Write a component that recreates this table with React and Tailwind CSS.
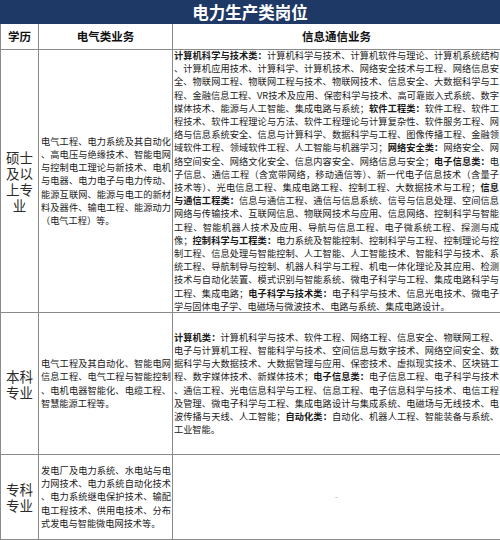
const B = ({ children }) => <b className="font-bold">{children}</b>;

// each line is rendered on its own, stretched to the cell width like the justified source
function Lines({ lines }) {
  return (
    <div className="w-full">
      {lines.map((ln, i) => (
        <div
          key={i}
          className={
            i === lines.length - 1
              ? "text-left"
              : "text-justify [text-align-last:justify]"
          }
        >
          {ln}
        </div>
      ))}
    </div>
  );
}

const masterElec = [
  "电气工程、电力系统及其自动化",
  "、高电压与绝缘技术、智能电网",
  "与控制电工理论与新技术、电机",
  "与电器、电力电子与电力传动、",
  "能源互联网、能源与电工的新材",
  "料及器件、输电工程、能源动力",
  "（电气工程）等。",
];

const masterInfo = [
  <><B>计算机科学与技术类：</B>计算机科学与技术、计算机软件与理论、计算机系统结构</>,
  "、计算机应用技术、计算科学、计算机技术、网络安全技术与工程、网络信息安",
  "全、物联网工程、物联网工程与技术、物联网技术、信息安全、大数据科学与工",
  "程、金融信息工程、VR技术及应用、保密科学与技术、高可靠嵌入式系统、数字",
  <>媒体技术、能源与人工智能、集成电路与系统；<B>软件工程类：</B>软件工程、软件工</>,
  "程技术、软件工程理论与方法、软件工程理论与计算复杂性、软件服务工程、网",
  "络与信息系统安全、信息与计算科学、数据科学与工程、图像传播工程、金融领",
  <>域软件工程、领域软件工程、人工智能与机器学习；<B>网络安全类：</B>网络安全、网</>,
  <>络空间安全、网络文化安全、信息内容安全、网络信息与安全；<B>电子信息类：</B>电</>,
  "子信息、通信工程（含宽带网络，移动通信等）、新一代电子信息技术（含量子",
  <>技术等）、光电信息工程、集成电路工程、控制工程、大数据技术与工程；<B>信息</B></>,
  <><B>与通信工程类：</B>信息与通信工程、通信与信息系统、信号与信息处理、空间信息</>,
  "网络与传输技术、互联网信息、物联网技术与应用、信息网络、控制科学与智能",
  "工程、智能机器人技术及应用、导航与信息工程、电子微系统工程、探测与成",
  <>像；<B>控制科学与工程类：</B>电力系统及智能控制、控制科学与工程、控制理论与控</>,
  "制工程、信息处理与智能控制、人工智能、人工智能技术、智能科学与技术、系",
  "统工程、导航制导与控制、机器人科学与工程、机电一体化理论及其应用、检测",
  "技术与自动化装置、模式识别与智能系统、微电子科学与工程、集成电路科学与",
  <>工程、集成电路；<B>电子科学与技术类：</B>电子科学与技术、信息光电技术、微电子</>,
  "学与固体电子学、电磁场与微波技术、电路与系统、集成电路设计。",
];

const bachElec = [
  "电气工程及其自动化、智能电网",
  "信息工程、电气工程与智能控制",
  "、电机电器智能化、电缆工程、",
  "智慧能源工程等。",
];

const bachInfo = [
  <><B>计算机类：</B>计算机科学与技术、软件工程、网络工程、信息安全、物联网工程、</>,
  "电子与计算机工程、智能科学与技术、空间信息与数字技术、网络空间安全、数",
  "据科学与大数据技术、大数据管理与应用、保密技术、虚拟现实技术、区块链工",
  <>程、数字媒体技术、新媒体技术；<B>电子信息类：</B>电子信息工程、电子科学与技术</>,
  "、通信工程、光电信息科学与工程、信息工程、电子信息科学与技术、电信工程",
  "及管理、微电子科学与工程、集成电路设计与集成系统、电磁场与无线技术、电",
  <>波传播与天线、人工智能；<B>自动化类：</B>自动化、机器人工程、智能装备与系统、</>,
  "工业智能。",
];

const collegeElec = [
  "发电厂及电力系统、水电站与电",
  "力网技术、电力系统自动化技术",
  "、电力系统继电保护技术、输配",
  "电工程技术、供用电技术、分布",
  "式发电与智能微电网技术等。",
];

function Level({ lines }) {
  return (
    <div className="border-r border-b border-[#8a8a8a] flex items-center justify-center text-[13.5px] leading-[16px] text-[#2a2a2a] text-center">
      <div>
        {lines.map((l, i) => (
          <div key={i}>{l}</div>
        ))}
      </div>
    </div>
  );
}

function Cell({ children, className = "" }) {
  return (
    <div
      className={
        "border-r border-b border-[#8a8a8a] flex items-center text-[9.2px] leading-[13.2px] text-[#1a1a1a] " +
        className
      }
    >
      {children}
    </div>
  );
}

export default function App() {
  return (
    <div
      className="w-[500px] h-[540px] bg-white overflow-hidden"
      style={{ fontFamily: '"Noto Sans CJK SC", "Noto Sans", sans-serif' }}
    >
      <div className="h-[24px] bg-[#1f3966] flex items-center justify-center text-white font-bold text-[16.5px]">
        电力生产类岗位
      </div>
      <div className="grid grid-cols-[38px_134px_328px] grid-rows-[26px_263px_142px_85px] border-l border-[#8a8a8a]">
        <div className="border-r border-b border-[#8a8a8a] flex items-center justify-center font-bold text-[11.5px] text-[#111]">
          学历
        </div>
        <div className="border-r border-b border-[#8a8a8a] flex items-center justify-center font-bold text-[11.5px] text-[#111]">
          电气类业务
        </div>
        <div className="border-r border-b border-[#8a8a8a] flex items-center justify-center font-bold text-[11.5px] text-[#111]">
          信息通信业务
        </div>

        <Level lines={["硕士", "及以", "上专", "业"]} />
        <Cell className="pl-[2px] pr-[1px]">
          <Lines lines={masterElec} />
        </Cell>
        <Cell className="pl-[1px] pr-[1px]">
          <Lines lines={masterInfo} />
        </Cell>

        <Level lines={["本科", "专业"]} />
        <Cell className="pl-[2px] pr-[1px]">
          <Lines lines={bachElec} />
        </Cell>
        <Cell className="pl-[1px] pr-[1px]">
          <Lines lines={bachInfo} />
        </Cell>

        <Level lines={["专科", "专业"]} />
        <Cell className="pl-[2px] pr-[1px]">
          <Lines lines={collegeElec} />
        </Cell>
        <Cell className="justify-center">
          <span className="text-[#999] text-[8px]">-</span>
        </Cell>
      </div>
    </div>
  );
}
